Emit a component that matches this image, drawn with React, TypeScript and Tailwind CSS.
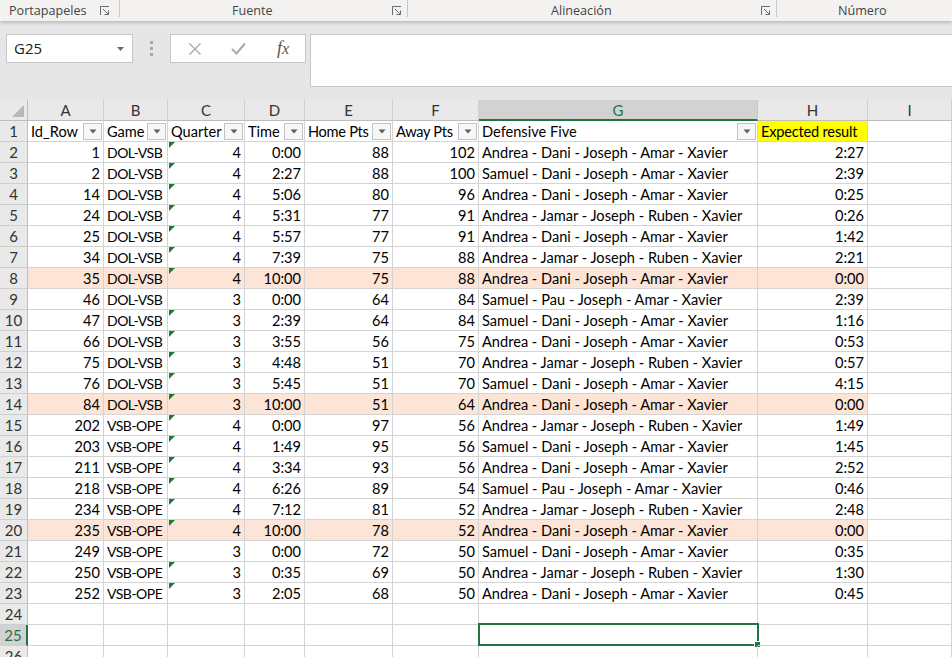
import React from 'react';

type Row = [number, string, number, string, number, number, string, string];

const rows: Row[] = [
  [1, 'DOL-VSB', 4, '0:00', 88, 102, 'Andrea - Dani - Joseph - Amar - Xavier', '2:27'],
  [2, 'DOL-VSB', 4, '2:27', 88, 100, 'Samuel - Dani - Joseph - Amar - Xavier', '2:39'],
  [14, 'DOL-VSB', 4, '5:06', 80, 96, 'Andrea - Dani - Joseph - Amar - Xavier', '0:25'],
  [24, 'DOL-VSB', 4, '5:31', 77, 91, 'Andrea - Jamar - Joseph - Ruben - Xavier', '0:26'],
  [25, 'DOL-VSB', 4, '5:57', 77, 91, 'Andrea - Dani - Joseph - Amar - Xavier', '1:42'],
  [34, 'DOL-VSB', 4, '7:39', 75, 88, 'Andrea - Jamar - Joseph - Ruben - Xavier', '2:21'],
  [35, 'DOL-VSB', 4, '10:00', 75, 88, 'Andrea - Dani - Joseph - Amar - Xavier', '0:00'],
  [46, 'DOL-VSB', 3, '0:00', 64, 84, 'Samuel - Pau - Joseph - Amar - Xavier', '2:39'],
  [47, 'DOL-VSB', 3, '2:39', 64, 84, 'Samuel - Dani - Joseph - Amar - Xavier', '1:16'],
  [66, 'DOL-VSB', 3, '3:55', 56, 75, 'Andrea - Dani - Joseph - Amar - Xavier', '0:53'],
  [75, 'DOL-VSB', 3, '4:48', 51, 70, 'Andrea - Jamar - Joseph - Ruben - Xavier', '0:57'],
  [76, 'DOL-VSB', 3, '5:45', 51, 70, 'Samuel - Dani - Joseph - Amar - Xavier', '4:15'],
  [84, 'DOL-VSB', 3, '10:00', 51, 64, 'Andrea - Dani - Joseph - Amar - Xavier', '0:00'],
  [202, 'VSB-OPE', 4, '0:00', 97, 56, 'Andrea - Jamar - Joseph - Ruben - Xavier', '1:49'],
  [203, 'VSB-OPE', 4, '1:49', 95, 56, 'Samuel - Dani - Joseph - Amar - Xavier', '1:45'],
  [211, 'VSB-OPE', 4, '3:34', 93, 56, 'Andrea - Dani - Joseph - Amar - Xavier', '2:52'],
  [218, 'VSB-OPE', 4, '6:26', 89, 54, 'Samuel - Pau - Joseph - Amar - Xavier', '0:46'],
  [234, 'VSB-OPE', 4, '7:12', 81, 52, 'Andrea - Jamar - Joseph - Ruben - Xavier', '2:48'],
  [235, 'VSB-OPE', 4, '10:00', 78, 52, 'Andrea - Dani - Joseph - Amar - Xavier', '0:00'],
  [249, 'VSB-OPE', 3, '0:00', 72, 50, 'Samuel - Dani - Joseph - Amar - Xavier', '0:35'],
  [250, 'VSB-OPE', 3, '0:35', 69, 50, 'Andrea - Jamar - Joseph - Ruben - Xavier', '1:30'],
  [252, 'VSB-OPE', 3, '2:05', 68, 50, 'Andrea - Dani - Joseph - Amar - Xavier', '0:45'],
];

const highlighted = [35, 84, 235];
const noFlag = [46, 249];

const cols = [
  { key: 'A', w: 'w-[76px]' },
  { key: 'B', w: 'w-[64px]' },
  { key: 'C', w: 'w-[77px]' },
  { key: 'D', w: 'w-[60px]' },
  { key: 'E', w: 'w-[88px]' },
  { key: 'F', w: 'w-[86px]' },
  { key: 'G', w: 'w-[279px]' },
  { key: 'H', w: 'w-[110px]' },
  { key: 'I', w: 'w-[84px]' },
];

const Launcher = () => (
  <svg width="10" height="10" viewBox="0 0 10 10" className="text-[#6b6b6b]">
    <path d="M0.5 9 V0.5 H9" fill="none" stroke="currentColor" strokeWidth="1" />
    <path d="M3 3 L8.5 8.5 M8.5 4.5 V8.5 H4.5" fill="none" stroke="currentColor" strokeWidth="1" />
  </svg>
);

const FilterButton = () => (
  <div className="absolute right-[1px] top-[2px] flex h-[17px] w-[19px] items-center justify-center border border-[#c3c3c3] bg-[#f7f7f7]">
    <svg width="8" height="5" viewBox="0 0 8 5">
      <path d="M0.5 0.5 H7.5 L4 4.5 Z" fill="#5f5f5f" />
    </svg>
  </div>
);

const Flag = () => (
  <div className="absolute left-[1px] top-0 h-0 w-0 border-r-[6px] border-t-[6px] border-r-transparent border-t-[#1d7a35]" />
);

type CellProps = {
  w: string;
  children?: React.ReactNode;
  right?: boolean;
  bg?: string;
  extra?: string;
};

const Cell = ({ w, children, right, bg = '', extra = '' }: CellProps) => (
  <div
    className={`relative flex h-[21px] shrink-0 items-center border-b border-r border-[#d4d4d4] px-[3px] pt-[1px] leading-[19px] whitespace-nowrap ${w} ${bg} ${extra} ${
      right ? 'justify-end' : 'justify-start'
    }`}
  >
    {children}
  </div>
);

const RowHead = ({ n, active }: { n: number; active?: boolean }) => (
  <div
    className={`flex h-[21px] w-[28px] shrink-0 items-center justify-center border-b border-[#cfcfcf] pt-[1px] text-[15px] ${
      active
        ? 'border-r-2 border-r-[#217346] bg-[#d2d2d2] text-[#217346]'
        : 'border-r border-r-[#bdbdbd] bg-[#e9e9e9] text-[#333]'
    }`}
  >
    {n}
  </div>
);

const narrow = 'tracking-[-0.5px] text-[14px]';

export default function App() {
  return (
    <div className="h-[657px] w-[952px] overflow-hidden bg-[#e6e6e6] font-['Lato',sans-serif] text-black">
      {/* ribbon group labels */}
      <div className="relative z-10 flex h-[21px] bg-[#f3f2f1] pt-[2px] font-['Open_Sans',sans-serif] text-[12.6px] text-[#444] shadow-[0_2px_3px_rgba(0,0,0,0.18)]">
        <div className="relative flex w-[119px] items-center pl-[9px]">
          <span>Portapapeles</span>
          <div className="absolute right-[9px] top-[4px]">
            <Launcher />
          </div>
        </div>
        <div className="mb-[4px] -mt-[2px] w-px bg-[#c8c8c8]" />
        <div className="relative flex w-[287px] items-center pl-[112px]">
          <span>Fuente</span>
          <div className="absolute right-[5px] top-[4px]">
            <Launcher />
          </div>
        </div>
        <div className="mb-[4px] -mt-[2px] w-px bg-[#c8c8c8]" />
        <div className="relative flex w-[368px] items-center pl-[143px]">
          <span>Alineación</span>
          <div className="absolute right-[5px] top-[4px]">
            <Launcher />
          </div>
        </div>
        <div className="mb-[4px] -mt-[2px] w-px bg-[#c8c8c8]" />
        <div className="flex flex-1 items-center pl-[61px]">
          <span>Número</span>
        </div>
      </div>

      {/* formula bar */}
      <div className="flex h-[79px] items-start pt-[13px] font-['Open_Sans',sans-serif]">
        <div className="ml-[6px] flex h-[29px] w-[127px] items-center justify-between border border-[#c6c6c6] bg-white pl-[7px] pr-[8px] text-[15px] text-[#222]">
          <span>G25</span>
          <svg width="7" height="4" viewBox="0 0 7 4">
            <path d="M0 0 H7 L3.5 4 Z" fill="#6a6a6a" />
          </svg>
        </div>
        <div className="flex h-[29px] w-[37px] flex-col items-center justify-center gap-[3px]">
          <div className="h-[3px] w-[3px] bg-[#a8a8a8]" />
          <div className="h-[3px] w-[3px] bg-[#a8a8a8]" />
          <div className="h-[3px] w-[3px] bg-[#a8a8a8]" />
        </div>
        <div className="flex h-[29px] w-[136px] items-center border border-[#c6c6c6] bg-white">
          <div className="flex w-[45px] justify-center pl-[2px]">
            <svg width="14" height="14" viewBox="0 0 14 14">
              <path d="M1.5 1.5 L12.5 12.5 M12.5 1.5 L1.5 12.5" stroke="#a9a9a9" strokeWidth="1.4" />
            </svg>
          </div>
          <div className="flex w-[45px] justify-center">
            <svg width="15" height="13" viewBox="0 0 15 13">
              <path d="M1 7 L5.5 11.5 L14 1.5" fill="none" stroke="#a9a9a9" strokeWidth="2" />
            </svg>
          </div>
          <div className="flex w-[44px] justify-center font-['Liberation_Serif',serif] text-[18px] italic text-[#555]">
            <span>
              f<span className="text-[16px]">x</span>
            </span>
          </div>
        </div>
        <div className="ml-[4px] h-[53px] flex-1 border border-r-0 border-[#c6c6c6] bg-white" />
      </div>

      {/* grid */}
      <div className="h-[557px] overflow-hidden bg-white text-[14.6px]">
        {/* column headers */}
        <div className="flex">
          <div className="relative h-[21px] w-[28px] shrink-0 border-b border-r border-[#bdbdbd] bg-[#e9e9e9]">
            <div className="absolute bottom-[3px] right-[3px] h-0 w-0 border-b-[12px] border-l-[12px] border-b-[#b7b7b7] border-l-transparent" />
          </div>
          {cols.map((c) =>
            c.key === 'G' ? (
              <div
                key={c.key}
                className={`flex h-[21px] shrink-0 items-center justify-center border-b-2 border-r border-b-[#217346] border-r-[#c6c6c6] bg-[#d2d2d2] pt-[1px] text-[15px] text-[#217346] ${c.w}`}
              >
                {c.key}
              </div>
            ) : (
              <div
                key={c.key}
                className={`flex h-[21px] shrink-0 items-center justify-center border-b border-r border-b-[#bdbdbd] border-r-[#cfcfcf] bg-[#e9e9e9] pt-[1px] text-[15px] text-[#333] ${c.w}`}
              >
                {c.key}
              </div>
            )
          )}
        </div>

        {/* row 1 */}
        <div className="flex">
          <RowHead n={1} />
          <Cell w={cols[0].w}>
            Id_Row
            <FilterButton />
          </Cell>
          <Cell w={cols[1].w}>
            Game
            <FilterButton />
          </Cell>
          <Cell w={cols[2].w}>
            Quarter
            <FilterButton />
          </Cell>
          <Cell w={cols[3].w}>
            Time
            <FilterButton />
          </Cell>
          <Cell w={cols[4].w} extra="tracking-[-0.3px]">
            Home Pts
            <FilterButton />
          </Cell>
          <Cell w={cols[5].w} extra="tracking-[-0.3px]">
            Away Pts
            <FilterButton />
          </Cell>
          <Cell w={cols[6].w}>
            Defensive Five
            <FilterButton />
          </Cell>
          <Cell w={cols[7].w} bg="bg-[#ffff00]" extra="tracking-[-0.2px]">
            Expected result
          </Cell>
          <Cell w={cols[8].w} />
        </div>

        {/* data rows */}
        {rows.map((r, i) => {
          const bg = highlighted.includes(r[0]) ? 'bg-[#fce4d6]' : '';
          return (
            <div key={r[0]} className="flex">
              <RowHead n={i + 2} />
              <Cell w={cols[0].w} right bg={bg}>
                {r[0]}
              </Cell>
              <Cell w={cols[1].w} bg={bg} extra={narrow}>
                {r[1]}
              </Cell>
              <Cell w={cols[2].w} right bg={bg}>
                {!noFlag.includes(r[0]) && <Flag />}
                {r[2]}
              </Cell>
              <Cell w={cols[3].w} right bg={bg}>
                {r[3]}
              </Cell>
              <Cell w={cols[4].w} right bg={bg}>
                {r[4]}
              </Cell>
              <Cell w={cols[5].w} right bg={bg}>
                {r[5]}
              </Cell>
              <Cell w={cols[6].w} bg={bg}>
                {r[6]}
              </Cell>
              <Cell w={cols[7].w} right bg={bg}>
                {r[7]}
              </Cell>
              <Cell w={cols[8].w} />
            </div>
          );
        })}

        {/* empty rows 24-26 */}
        {[24, 25, 26].map((n) => (
          <div key={n} className="flex">
            <RowHead n={n} active={n === 25} />
            {cols.map((c) => (
              <Cell key={c.key} w={c.w}>
                {n === 25 && c.key === 'G' && (
                  <div className="absolute -left-[1px] -top-[2px] -right-[2px] -bottom-[1px] border-2 border-[#217346]">
                    <div className="absolute -bottom-[4px] -right-[4px] h-[7px] w-[7px] border border-white bg-[#217346]" />
                  </div>
                )}
              </Cell>
            ))}
          </div>
        ))}
      </div>
    </div>
  );
}
